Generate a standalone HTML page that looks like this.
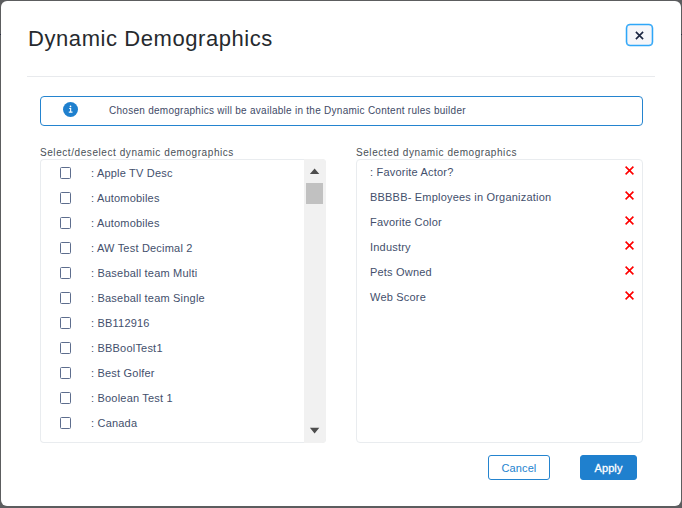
<!DOCTYPE html>
<html>
<head>
<meta charset="utf-8">
<style>
*{box-sizing:border-box;margin:0;padding:0}
html,body{width:682px;height:508px;overflow:hidden;background:#5c5d5f;font-family:"Liberation Sans",sans-serif;}
#dlg{position:absolute;left:1px;top:1px;width:680px;height:505px;background:#fff;border-radius:6px;}
#title{position:absolute;left:27px;top:24px;font-size:22px;line-height:28px;color:#262a2e;white-space:nowrap;letter-spacing:0.57px}
#close{position:absolute;left:625px;top:23px;width:27px;height:22px;border:1px solid #2ea6f8;border-radius:4px;background:#f6f6f9;box-shadow:0 0 0 0.25px #2ea6f8, inset 0 0 0 0.3px #2ea6f8}
#close svg{position:absolute;left:8px;top:5.5px}
#hr{position:absolute;left:26px;top:75px;width:628px;height:1px;background:#e8eaed}
#info{position:absolute;left:39px;top:95px;width:603px;height:30px;border:1px solid #2484cf;border-radius:4px;}
#info .ic{position:absolute;left:22px;top:5px;width:15px;height:15px;border-radius:50%;background:#1f80ce}
#info .tx{position:absolute;left:68px;top:7px;font-size:10px;line-height:14px;color:#3e4a66;white-space:nowrap;letter-spacing:0.27px}
.lbl{position:absolute;top:145px;font-size:10px;line-height:14px;color:#495057;white-space:nowrap;letter-spacing:0.57px}
.panel{position:absolute;top:158px;height:284px;border:1px solid #e9ecef;border-radius:4px;overflow:hidden;background:#fff}
#left{left:39px;width:286px;border:0;box-shadow:inset 0 0 0 1px #e9ecef}
#left .in{position:absolute;left:1px;top:1px;right:1px;bottom:1px}
#right{left:355px;width:287px}
.row{position:absolute;left:0;height:25px;font-size:11px;line-height:25px;color:#434f6c;white-space:nowrap;letter-spacing:0.2px}
.cb{position:absolute;left:19px;top:6px;width:11px;height:12px;border:1px solid #5d6d8d;border-radius:1.5px;background:#fff}
.row span{position:absolute;left:50px;top:0}
#right .row span{left:13px}
.x{position:absolute;left:268px;top:6px}
#sb{position:absolute;right:0;top:0;width:22px;height:100%;background:#f1f1f1}
#sb .th{position:absolute;left:2px;top:24px;width:17px;height:21px;background:#c1c1c1}
#sb .up{position:absolute;left:5px;top:8px;width:0;height:0;border-left:5px solid transparent;border-right:5px solid transparent;border-bottom:6px solid #4d4d4d}
#sb .dn{position:absolute;left:5px;bottom:8px;width:0;height:0;border-left:5px solid transparent;border-right:5px solid transparent;border-top:6px solid #4d4d4d}
.btn{position:absolute;top:454px;height:25px;border-radius:3px;font-size:11px;line-height:25px;text-align:center;letter-spacing:0.1px}
#cancel{left:487px;width:62px;border:1px solid #2484cf;color:#2484cf;background:#fff}
#apply{left:579px;width:57px;border:1px solid #1f80ce;background:#1f80ce;color:#fff;-webkit-text-stroke:0.3px #fff}
</style>
</head>
<body>
<div style="position:absolute;left:0;top:34px;width:682px;height:1px;background:#2b3043"></div>
<div id="dlg">
  <div id="title">Dynamic Demographics</div>
  <div id="close"><svg width="9" height="9" viewBox="0 0 9 9"><path d="M0.9 0.9 L8.1 8.1 M8.1 0.9 L0.9 8.1" stroke="#1b2540" stroke-width="1.6" fill="none"/></svg></div>
  <div id="hr"></div>
  <div id="info"><div class="ic"><svg width="15" height="15" viewBox="0 0 15 15"><circle cx="7.5" cy="4.4" r="0.85" fill="#fff"/><path d="M6.2 6.1h2v3.5h1.3v1.1h-3.7v-1.1h1.3v-2.5h-0.9z" fill="#fff"/></svg></div><div class="tx">Chosen demographics will be available in the Dynamic Content rules builder</div></div>
  <div class="lbl" style="left:39px">Select/deselect dynamic demographics</div>
  <div class="lbl" style="left:355px">Selected dynamic demographics</div>
  <div class="panel" id="left"><div class="in">
    <div class="row" style="top:1px"><div class="cb"></div><span>: Apple TV Desc</span></div>
    <div class="row" style="top:26px"><div class="cb"></div><span>: Automobiles</span></div>
    <div class="row" style="top:51px"><div class="cb"></div><span>: Automobiles</span></div>
    <div class="row" style="top:76px"><div class="cb"></div><span>: AW Test Decimal 2</span></div>
    <div class="row" style="top:101px"><div class="cb"></div><span>: Baseball team Multi</span></div>
    <div class="row" style="top:126px"><div class="cb"></div><span>: Baseball team Single</span></div>
    <div class="row" style="top:151px"><div class="cb"></div><span>: BB112916</span></div>
    <div class="row" style="top:176px"><div class="cb"></div><span>: BBBoolTest1</span></div>
    <div class="row" style="top:201px"><div class="cb"></div><span>: Best Golfer</span></div>
    <div class="row" style="top:226px"><div class="cb"></div><span>: Boolean Test 1</span></div>
    <div class="row" style="top:251px"><div class="cb"></div><span>: Canada</span></div>
    </div><div id="sb"><div class="th"></div><svg width="21" height="282" viewBox="0 0 21 282" style="position:absolute;left:0;top:1px"><path d="M5.9 14.1L15.3 14.1L10.6 8.6Z M5.9 267.8L15.3 267.8L10.6 273.4Z" fill="#4d4d4d"/></svg></div>
  </div>
  <div class="panel" id="right">
    <div class="row" style="top:0px"><span>: Favorite Actor?</span><svg class="x" width="9" height="9" viewBox="0 0 9 9"><path d="M0.6 0.6 L8.4 8.4 M8.4 0.6 L0.6 8.4" stroke="#f00" stroke-width="1.6" fill="none"/></svg></div>
    <div class="row" style="top:25px"><span>BBBBB- Employees in Organization</span><svg class="x" width="9" height="9" viewBox="0 0 9 9"><path d="M0.6 0.6 L8.4 8.4 M8.4 0.6 L0.6 8.4" stroke="#f00" stroke-width="1.6" fill="none"/></svg></div>
    <div class="row" style="top:50px"><span>Favorite Color</span><svg class="x" width="9" height="9" viewBox="0 0 9 9"><path d="M0.6 0.6 L8.4 8.4 M8.4 0.6 L0.6 8.4" stroke="#f00" stroke-width="1.6" fill="none"/></svg></div>
    <div class="row" style="top:75px"><span>Industry</span><svg class="x" width="9" height="9" viewBox="0 0 9 9"><path d="M0.6 0.6 L8.4 8.4 M8.4 0.6 L0.6 8.4" stroke="#f00" stroke-width="1.6" fill="none"/></svg></div>
    <div class="row" style="top:100px"><span>Pets Owned</span><svg class="x" width="9" height="9" viewBox="0 0 9 9"><path d="M0.6 0.6 L8.4 8.4 M8.4 0.6 L0.6 8.4" stroke="#f00" stroke-width="1.6" fill="none"/></svg></div>
    <div class="row" style="top:125px"><span>Web Score</span><svg class="x" width="9" height="9" viewBox="0 0 9 9"><path d="M0.6 0.6 L8.4 8.4 M8.4 0.6 L0.6 8.4" stroke="#f00" stroke-width="1.6" fill="none"/></svg></div>
  </div>
  <div class="btn" id="cancel">Cancel</div>
  <div class="btn" id="apply">Apply</div>
</div>
</body>
</html>
